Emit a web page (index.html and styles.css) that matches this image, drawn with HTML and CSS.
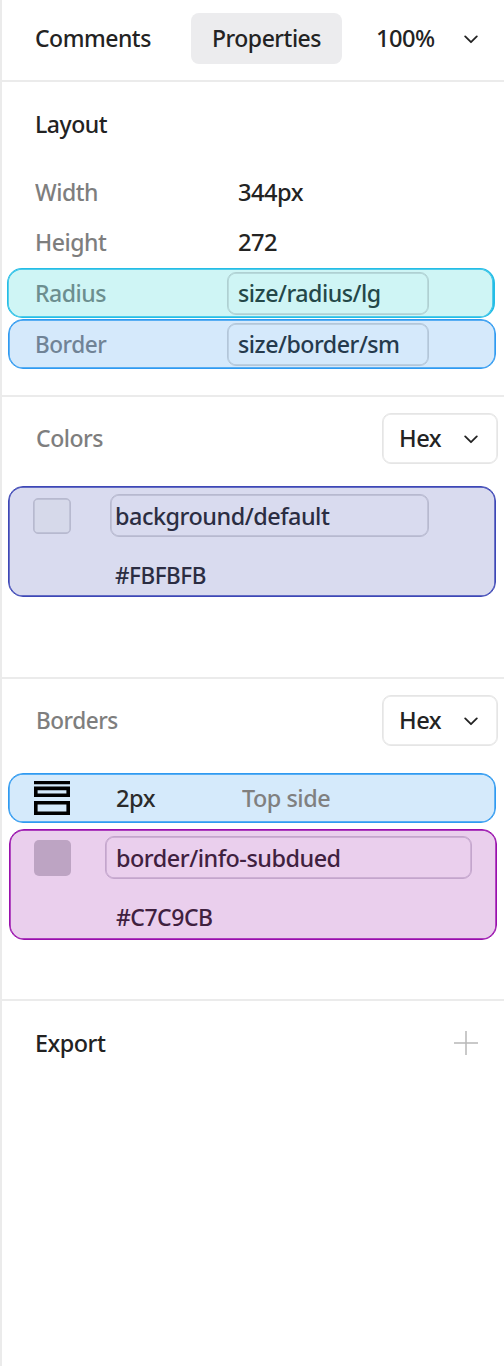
FILE: index.html
```html
<!DOCTYPE html>
<html lang="en">
<head>
<meta charset="utf-8">
<title>Properties</title>
<link rel="stylesheet" href="styles.css">
</head>
<body>
<main class="panel">
  <header class="tabs">
    <span class="tab"><span class="t t-comments">Comments</span></span>
    <span class="tab tab-active"><span class="t t-properties">Properties</span></span>
    <span class="zoom"><span class="t t-num">100%</span>
      <svg class="chevron" viewBox="0 0 14 9"><path d="M1.2 1.4 7 7.2l5.8-5.8"/></svg></span>
  </header>

  <section class="layout">
    <h2 class="title"><span class="t">Layout</span></h2>
    <div class="row"><span class="label"><span class="t">Width</span></span><span class="value"><span class="t t-num">344px</span></span></div>
    <div class="row"><span class="label"><span class="t">Height</span></span><span class="value"><span class="t t-num">272</span></span></div>
    <div class="row mark mark-radius"><span class="label"><span class="t">Radius</span></span><span class="token"><span class="t t-token">size/radius/lg</span></span></div>
    <div class="row mark mark-border"><span class="label"><span class="t t-border">Border</span></span><span class="token"><span class="t t-token">size/border/sm</span></span></div>
  </section>

  <section class="colors">
    <div class="head"><h2 class="subtitle"><span class="t">Colors</span></h2>
      <button class="select"><span class="t t-num">Hex</span><svg class="chevron" viewBox="0 0 14 9"><path d="M1.2 1.4 7 7.2l5.8-5.8"/></svg></button></div>
    <div class="mark card card-bg">
      <span class="swatch"></span>
      <div class="info"><span class="token"><span class="t t-name">background/default</span></span><span class="code"><span class="t t-hexcode">#FBFBFB</span></span></div>
    </div>
  </section>

  <section class="borders">
    <div class="head"><h2 class="subtitle"><span class="t t-border">Borders</span></h2>
      <button class="select"><span class="t t-num">Hex</span><svg class="chevron" viewBox="0 0 14 9"><path d="M1.2 1.4 7 7.2l5.8-5.8"/></svg></button></div>
    <div class="mark side">
      <svg class="side-icon" viewBox="0 0 36 34"><path class="fill" d="M0 0h36v3.3H0z"/><path d="M1.8 7.4h32.4v6.8H1.8zM1.8 21.8h32.4v10.4H1.8z"/></svg>
      <span class="size"><span class="t t-num">2px</span></span>
      <span class="muted"><span class="t t-name">Top side</span></span>
    </div>
    <div class="mark card card-info">
      <span class="swatch"></span>
      <div class="info"><span class="token"><span class="t t-name">border/info-subdued</span></span><span class="code"><span class="t t-comments">#C7C9CB</span></span></div>
    </div>
  </section>

  <section class="export">
    <h2 class="title"><span class="t t-name">Export</span></h2>
    <svg class="plus" viewBox="0 0 24 24"><path d="M12 0v24M0 12h24"/></svg>
  </section>
</main>
</body>
</html>
```
FILE: styles.css
```css
* { box-sizing: border-box; }
body { margin: 0; background: #fff; color: #232323; font: 500 24px/34px "Noto Sans", "Open Sans", sans-serif; }
h2 { margin: 0; font: inherit; }
.panel { width: 504px; height: 1366px; border-left: 2px solid #ebebeb; overflow: hidden; }

/* Slightly narrowed lettering */
.t { display: inline-block; white-space: nowrap; letter-spacing: -0.5px; transform: scaleX(.96); transform-origin: 0 50%; }
.t-comments, .t-properties { transform: scaleX(.957); }
.t-num { transform: scaleX(.985); }
.t-token { transform: scaleX(.966); }
.t-name { transform: scaleX(.975); }
.t-border { transform: scaleX(.94); }
.t-hexcode { transform: scaleX(.937); }

.tabs { display: flex; height: 82px; padding: 13px 0 0 33px; border-bottom: 2px solid #ebebeb; }
.tab, .zoom { display: flex; align-items: center; height: 51px; padding-bottom: 2px; }
.tab { width: 156px; }
.tab-active { width: 151px; padding-left: 21px; border-radius: 8px; background: #ececee; }
.zoom { width: 136px; padding-left: 34px; }
.chevron { width: 14px; height: 9px; margin-top: 4px; fill: none; stroke: #232323; stroke-width: 1.8; stroke-linecap: round; stroke-linejoin: round; }
.zoom .chevron { margin-left: auto; }

.layout { height: 315px; padding-top: 17px; border-bottom: 2px solid #ebebeb; }
.title { height: 50px; padding: 8px 0 0 33px; color: #222; }
.row { display: flex; align-items: center; height: 51px; padding-left: 33px; }
.title + .row { margin-top: 17px; }
.row + .row:not(.mark) { padding-bottom: 1px; }
.label { width: 203px; color: #7e7e7e; }
.mark { border: 1px solid; border-radius: 15px; box-shadow: inset 0 0 0 .7px var(--edge); border-color: var(--edge); }
.token { display: flex; align-items: center; height: 43px; border: 1px solid var(--rim); border-radius: 9px; box-shadow: inset 0 0 0 .7px var(--rim); }
.row .token { width: 202px; padding-left: 10px; }
.row.mark { width: 488px; height: 50px; margin-left: 6px; padding-left: 26px; }
.row.mark .label { width: 192px; }
.row.mark-radius { --edge: #24bde6; --rim: #afd0d2; width: 489px; margin-left: 5px; padding-left: 27px; border-right-width: 2px; background: #cff5f5; color: #244849; }
.row.mark-radius { width: 488px; }
.mark-radius .label { color: #6c8e8f; }
.row.mark-border { --edge: #2f9af1; --rim: #b3c6d9; margin: 1px 0 0 6px; background: #d5e9fb; color: #253a4d; }
.mark-border .label { color: #708396; }

.head { display: flex; align-items: center; height: 51px; padding: 0 6px 0 33px; }
.subtitle { flex: 1; padding-bottom: 2px; color: #7e7e7e; }
.select { --rim: #e5e5e5; display: flex; align-items: center; justify-content: space-between; width: 116px; height: 51px; padding: 0 19px 2px 16px; border: 1px solid var(--rim); border-radius: 9px; box-shadow: inset 0 0 0 .7px var(--rim); background: #fff; color: inherit; font: inherit; }
.colors { height: 282px; padding-top: 16px; border-bottom: 2px solid #ebebeb; }
.colors .subtitle { padding-left: 1px; }
.card { display: flex; align-items: flex-start; width: 488px; height: 111px; margin-left: 6px; }
.card-bg { --edge: #3d47b6; --rim: #b7b9cf; margin-top: 22px; padding: 7px 0 0 24px; background: #d9dbef; color: #2b2d42; }
.swatch { width: 38px; height: 36px; margin-top: 4px; border-radius: 5px; }
.card-bg .swatch { border: 1px solid var(--rim); box-shadow: inset 0 0 0 .7px var(--rim); background: #d6d9ea; }
.info { display: flex; flex-direction: column; }
.card-bg .info { margin-left: 39px; }
.card-bg .token { width: 319px; padding-left: 4px; }
.code { display: flex; align-items: center; height: 34px; margin-top: 21px; padding-left: 5px; }

.borders { height: 322px; padding-top: 16px; border-bottom: 2px solid #ebebeb; }
.borders .head { padding-left: 34px; }
.side { --edge: #2f9af1; display: flex; align-items: center; width: 488px; height: 50px; margin: 27px 0 0 6px; padding-left: 25px; background: #d5eafb; color: #2b2b2b; }
.side-icon { width: 36px; height: 34px; fill: none; stroke: #000; stroke-width: 3.6; }
.side-icon .fill { fill: #000; stroke: none; }
.size { width: 126px; margin-left: 46px; }
.muted { color: #808080; }
.card-info { --edge: #990fad; --rim: #c3a5cc; margin: 6px 0 0 7px; padding: 6px 0 0 24px; background: #eacfed; color: #3f213f; }
.card-info .swatch { width: 37px; background: #bda4c3; }
.card-info .info { margin-left: 34px; }
.card-info .token { width: 367px; padding-left: 10px; }
.card-info .code { padding-left: 11px; }

.export { display: flex; justify-content: space-between; padding: 17px 26px 0 0; }
.plus { width: 24px; height: 24px; margin-top: 13px; fill: none; stroke: #b8b8b8; stroke-width: 1.5; }
```
